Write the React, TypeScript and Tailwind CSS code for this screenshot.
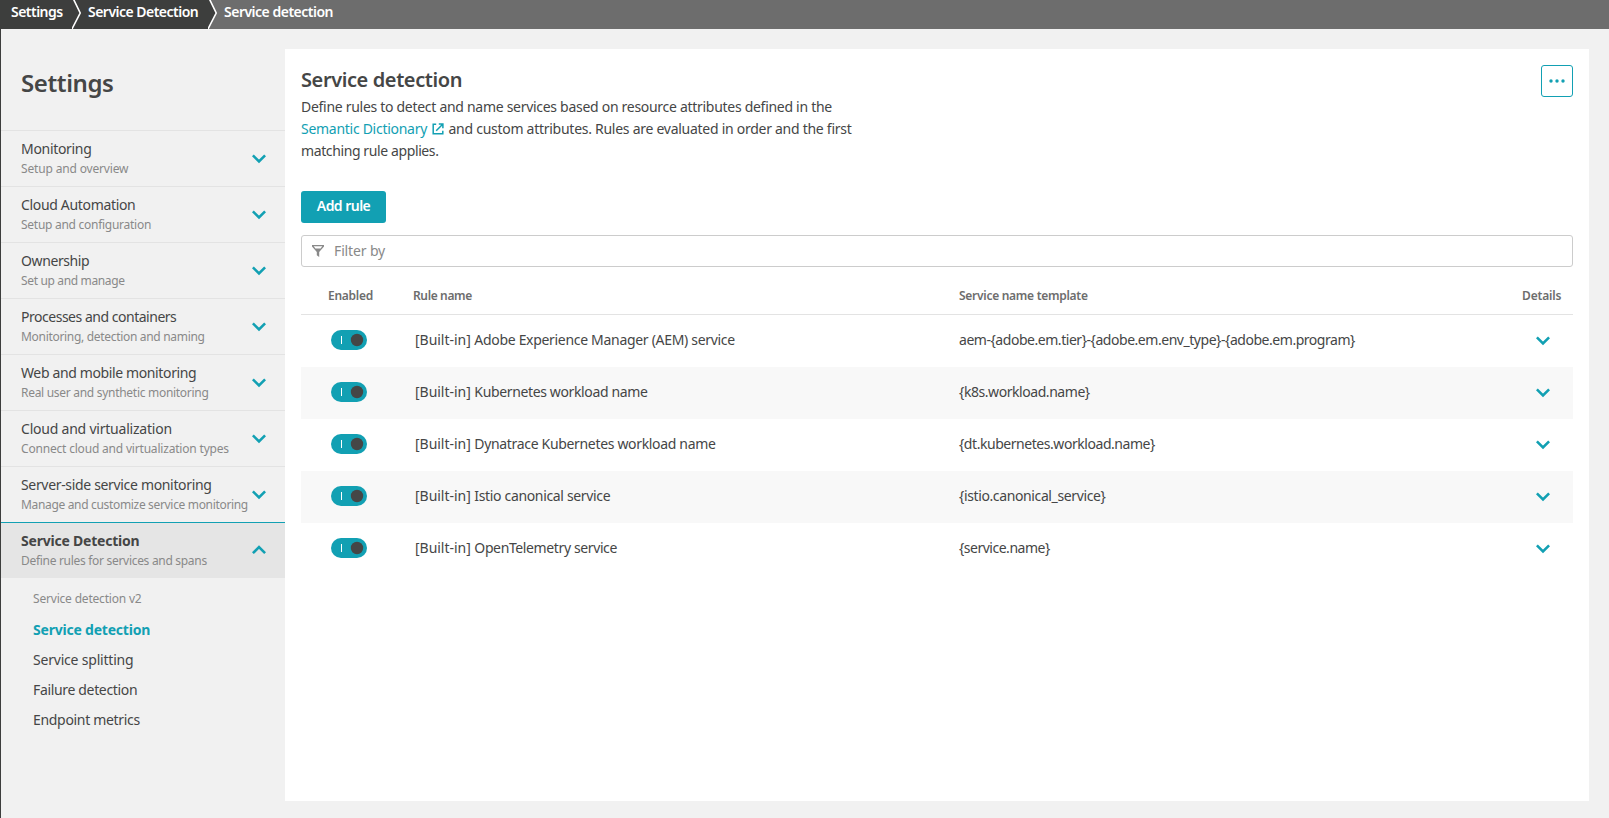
import type { ReactNode } from "react";

type NavItem = {
  title: string;
  subtitle: string;
  titleClass: string;
  subtitleClass: string;
  open?: boolean;
};

const navItems: NavItem[] = [
  { title: "Monitoring", subtitle: "Setup and overview", titleClass: "tracking-[-0.31px]", subtitleClass: "tracking-[-0.16px]" },
  { title: "Cloud Automation", subtitle: "Setup and configuration", titleClass: "tracking-[-0.33px]", subtitleClass: "tracking-[-0.27px]" },
  { title: "Ownership", subtitle: "Set up and manage", titleClass: "tracking-[-0.4px]", subtitleClass: "tracking-[-0.35px]" },
  { title: "Processes and containers", subtitle: "Monitoring, detection and naming", titleClass: "tracking-[-0.48px]", subtitleClass: "tracking-[-0.31px]" },
  { title: "Web and mobile monitoring", subtitle: "Real user and synthetic monitoring", titleClass: "tracking-[-0.37px]", subtitleClass: "tracking-[-0.29px]" },
  { title: "Cloud and virtualization", subtitle: "Connect cloud and virtualization types", titleClass: "tracking-[-0.22px]", subtitleClass: "tracking-[-0.19px]" },
  { title: "Server-side service monitoring", subtitle: "Manage and customize service monitoring", titleClass: "tracking-[-0.33px]", subtitleClass: "tracking-[-0.33px]" },
  { title: "Service Detection", subtitle: "Define rules for services and spans", titleClass: "font-bold tracking-[-0.22px]", subtitleClass: "tracking-[-0.3px]", open: true },
];

const subItems = [
  { label: "Service detection", className: "font-bold text-[#12a0b3] tracking-[-0.21px]" },
  { label: "Service splitting", className: "tracking-[-0.2px]" },
  { label: "Failure detection", className: "tracking-[-0.34px]" },
  { label: "Endpoint metrics", className: "tracking-[-0.32px]" },
];

const rules = [
  { name: "Adobe Experience Manager (AEM) service", template: "aem-{adobe.em.tier}-{adobe.em.env_type}-{adobe.em.program}", nameClass: "tracking-[-0.31px]", templateClass: "tracking-[-0.46px]" },
  { name: "Kubernetes workload name", template: "{k8s.workload.name}", nameClass: "tracking-[-0.36px]", templateClass: "tracking-[-0.44px]" },
  { name: "Dynatrace Kubernetes workload name", template: "{dt.kubernetes.workload.name}", nameClass: "tracking-[-0.33px]", templateClass: "tracking-[-0.45px]" },
  { name: "Istio canonical service", template: "{istio.canonical_service}", nameClass: "tracking-[-0.34px]", templateClass: "tracking-[-0.38px]" },
  { name: "OpenTelemetry service", template: "{service.name}", nameClass: "tracking-[-0.38px]", templateClass: "tracking-[-0.49px]" },
];

function Chevron({ up = false }: { up?: boolean }) {
  return (
    <svg className="h-[10px] w-[14px] shrink-0" viewBox="0 0 14 10" fill="none" stroke="#12a0b3" strokeWidth="2.6">
      <path d={up ? "M.9 8.2 7 2.1l6.1 6.1" : "M.9 1.4 7 7.5l6.1-6.1"} />
    </svg>
  );
}

function CrumbArrow({ next }: { next: string }) {
  return (
    <svg className="h-[29px] w-[10px] shrink-0" viewBox="0 0 10 29" fill="none">
      <path d="M.2 -3.5 8.2 13 -.3 29.5H10V-3.5Z" fill={next} />
      <path d="M.2 -3.5 8.2 13 -.3 29.5" stroke="#fff" strokeWidth="1.6" />
    </svg>
  );
}

function Breadcrumbs() {
  return (
    <header className="flex h-[29px] shrink-0 bg-[#6d6d6d] text-sm leading-6 font-semibold text-white">
      <div className="flex bg-[#3d3e3d]">
        <span className="w-[72px] pl-[11px] tracking-[-0.52px]">Settings</span>
        <CrumbArrow next="#3d3e3d" />
        <span className="w-[126px] pl-1.5 tracking-[-0.52px]">Service Detection</span>
        <CrumbArrow next="#6d6d6d" />
      </div>
      <span className="pl-1.5 tracking-[-0.5px]">Service detection</span>
    </header>
  );
}

function Sidebar() {
  return (
    <aside className="flex w-[285px] shrink-0 flex-col border-l border-[#3d3e3d]">
      <h1 className="h-[101px] pt-[38px] pl-5 text-2xl leading-8 font-semibold tracking-[-0.4px]">Settings</h1>
      <nav>
        {navItems.map((item) => (
          <div
            key={item.title}
            className={
              item.open
                ? "flex h-14 border-t border-[#12a0b3] bg-[#e5e5e5] pl-5"
                : "flex h-14 border-t border-[#e3e3e3] pl-5"
            }
          >
            <div className="w-[231px] shrink-0 pt-[8px] whitespace-nowrap">
              <div className={`text-sm leading-5 ${item.titleClass}`}>{item.title}</div>
              <div className={`pt-px text-xs leading-[18px] text-[#898989] ${item.subtitleClass}`}>{item.subtitle}</div>
            </div>
            <div className={item.open ? "pt-[22px]" : "pt-[23px]"}>
              <Chevron up={item.open} />
            </div>
          </div>
        ))}
      </nav>
      <div className="flex flex-col pt-3 pl-8">
        <div className="pb-[7px] text-xs leading-[18px] tracking-[-0.19px] text-[#898989]">Service detection v2</div>
        {subItems.map((item) => (
          <a key={item.label} className={`h-[30px] text-sm leading-[30px] ${item.className}`}>{item.label}</a>
        ))}
      </div>
    </aside>
  );
}

function Toggle() {
  return (
    <svg className="h-5 w-9" viewBox="0 0 36 20">
      <rect width="36" height="20" rx="10" fill="#12a0b3" />
      <rect x="10" y="6" width="1" height="8" fill="#fff" />
      <circle cx="26" cy="10" r="6.2" fill="#454646" />
    </svg>
  );
}

function Row({ className, children }: { className: string; children: ReactNode }) {
  return <div className={`grid grid-cols-[112px_546px_1fr_51px] ${className}`}>{children}</div>;
}

export default function App() {
  return (
    <div className="flex h-[818px] w-[1609px] flex-col overflow-hidden bg-[#f1f1f1] font-['Noto_Sans',sans-serif] text-[#454646]">
      <Breadcrumbs />
      <div className="flex min-h-0 flex-1">
        <Sidebar />
        <main className="mt-5 mb-[17px] flex w-[1304px] flex-col bg-white px-4 pt-4">
          <div className="flex items-start justify-between">
            <div className="whitespace-nowrap">
              <h2 className="pt-px text-xl leading-7 font-semibold tracking-[-0.4px]">Service detection</h2>
              <div className="pt-0.5 text-sm leading-[22px]">
                <p className="tracking-[-0.29px]">Define rules to detect and name services based on resource attributes defined in the</p>
                <p className="flex tracking-[-0.27px]">
                  <a className="w-[131px] tracking-[-0.28px] text-[#12a0b3]">Semantic Dictionary</a>
                  <svg className="mt-[5px] mr-[4.5px] h-3 w-3" viewBox="0 0 12 12" fill="none" stroke="#12a0b3" strokeWidth="1.5">
                    <path d="M4.2 1.2H1.2v9.6h9.6V7.8M4.2 7.8l6-6M6.8 1.1h4.1v4.1" />
                  </svg>
                  <span>and custom attributes. Rules are evaluated in order and the first</span>
                </p>
                <p className="tracking-[-0.39px]">matching rule applies.</p>
              </div>
            </div>
            <button className="flex h-8 w-8 items-center justify-center rounded-[3px] border border-[#12a0b3]">
              <svg className="h-4 w-4" viewBox="0 0 16 16" fill="#12a0b3">
                <circle cx="2" cy="8" r="1.7" />
                <circle cx="8" cy="8" r="1.7" />
                <circle cx="14" cy="8" r="1.7" />
              </svg>
            </button>
          </div>
          <button className="mt-[29px] h-8 w-[85px] rounded-[3px] bg-[#12a0b3] pb-0.5 text-sm leading-[30px] font-semibold tracking-[-0.53px] text-white">
            Add rule
          </button>
          <div className="mt-3 flex h-8 shrink-0 items-center rounded-[3px] border border-[#cccccc] pl-2.5">
            <svg className="h-3 w-3" viewBox="0 0 12 12" fill="#898989" fillRule="evenodd">
              <path d="M0 0H12V1.4L7.2 7V12L4.8 10.3V7L0 1.4ZM1.7 1.3 3.4 3.4H8.6L10.3 1.3Z" />
            </svg>
            <span className="pb-px pl-2.5 text-sm leading-[30px] tracking-[-0.14px] text-[#898989]">Filter by</span>
          </div>
          <Row className="h-12 shrink-0 border-b border-[#e3e3e3] pt-[18px] text-xs leading-[21px] font-semibold text-[#6d6d6d]">
            <span className="pl-[27px] tracking-[-0.26px]">Enabled</span>
            <span className="tracking-[-0.36px]">Rule name</span>
            <span className="tracking-[-0.28px]">Service name template</span>
            <span className="tracking-[-0.15px]">Details</span>
          </Row>
          {rules.map((rule) => (
            <Row key={rule.name} className="h-[52px] shrink-0 text-sm leading-[50px] even:bg-[#f8f8f8] odd:bg-white">
              <span className="pt-[15px] pl-[30px]">
                <Toggle />
              </span>
              <span className={`pl-0.5 whitespace-nowrap ${rule.nameClass}`}>
                <span className="tracking-[-0.03px]">[Built-in] </span>
                {rule.name}
              </span>
              <span className={rule.templateClass}>{rule.template}</span>
              <span className="pt-[21px] pl-3.5">
                <Chevron />
              </span>
            </Row>
          ))}
        </main>
      </div>
    </div>
  );
}
